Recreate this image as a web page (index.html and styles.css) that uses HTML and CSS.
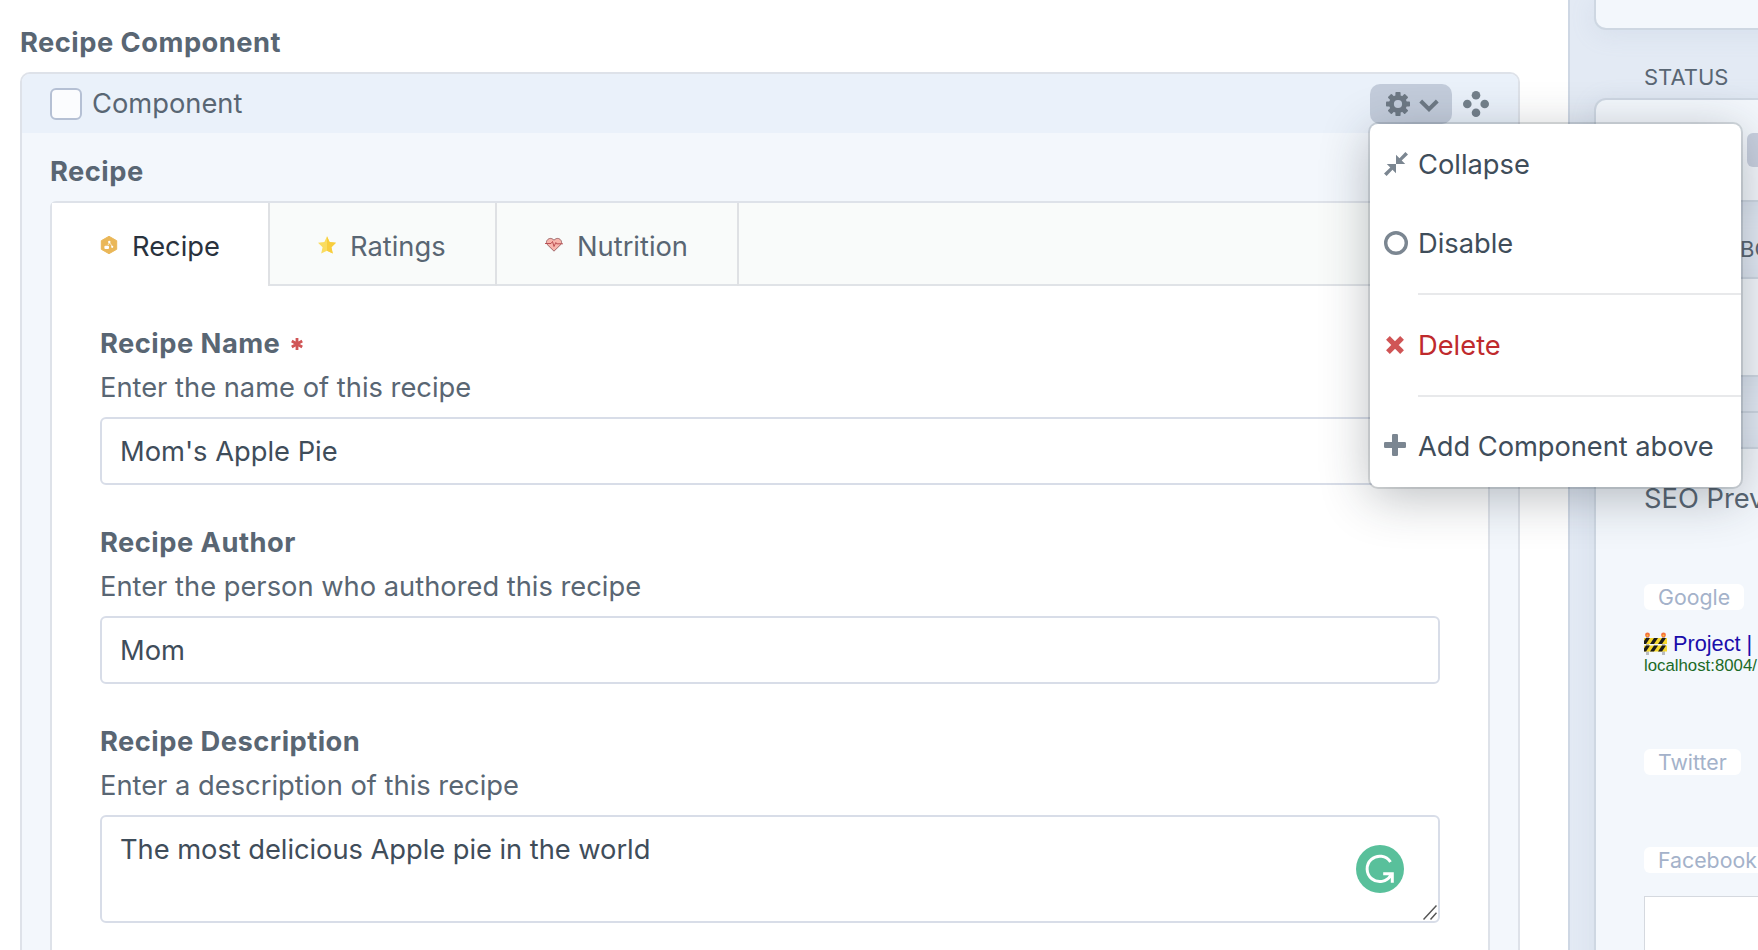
FILE: index.html
```html
<!DOCTYPE html>
<html lang="en">
<head>
<meta charset="utf-8">
<title>Recipe Component</title>
<link rel="stylesheet" href="styles.css">
</head>
<body>
<div class="app">
  <main class="content">
    <h2 class="heading">Recipe Component</h2>
    <section class="block">
      <header class="block-head">
        <span class="checkbox"></span>
        <span class="block-name">Component</span>
        <div class="actions">
          <button class="settings" type="button">
            <svg width="24" height="24" viewBox="0 0 24 24"><g fill="#6e7985"><circle cx="12" cy="12" r="9"/><rect x="9.4" y="0" width="5.2" height="24" rx=".8"/><rect x="0" y="9.4" width="24" height="5.2" rx=".8"/><g transform="rotate(45 12 12)"><rect x="9.4" y="0" width="5.2" height="24" rx=".8"/><rect x="0" y="9.4" width="24" height="5.2" rx=".8"/></g></g><circle cx="12" cy="12" r="4.1" fill="#c3ccdb"/></svg>
            <svg width="20" height="14" viewBox="0 0 20 14"><path d="M1.7 2 10 10.2 18.300 2" fill="none" stroke="#6e7985" stroke-width="4"/></svg>
          </button>
          <svg class="move" width="26" height="26" viewBox="0 0 26 26" fill="#74808b"><circle cx="13" cy="4.300" r="4.300"/><circle cx="4.300" cy="13" r="4.300"/><circle cx="21.700" cy="13" r="4.300"/><circle cx="13" cy="21.700" r="4.300"/></svg>
          <div class="menu">
            <div class="item"><svg width="24" height="24" viewBox="0 0 24 24" fill="#7b8691"><path d="M12 2.800V12H21.200L17.700 8.500 24 2.600 21.400 0 15.500 6.300Z"/><path d="M12 21.200V12H2.800L6.300 15.500 0 21.400 2.600 24 8.500 17.700Z"/></svg><span>Collapse</span></div>
            <div class="item"><svg width="24" height="24" viewBox="0 0 24 24"><circle cx="12" cy="12" r="10.300" fill="none" stroke="#7b8691" stroke-width="3.400"/></svg><span>Disable</span></div>
            <hr>
            <div class="item danger"><svg width="24" height="24" viewBox="0 0 24 24"><path d="M5 6 17 18M17 6 5 18" stroke="#d05556" stroke-width="6.200" stroke-linecap="square" transform="translate(1.540 1.680) scale(.86)"/></svg><span>Delete</span></div>
            <hr>
            <div class="item"><svg width="24" height="24" viewBox="0 0 24 24" fill="#7b8691"><rect x="8" y="0" width="6" height="22" rx="1.300"/><rect x="0" y="8" width="22" height="6" rx="1.300"/></svg><span class="add">Add Component above</span></div>
          </div>
        </div>
      </header>
      <div class="block-body">
        <h3 class="subheading">Recipe</h3>
        <div class="panel">
          <nav class="tabs">
            <a class="tab tab-recipe active">
              <svg width="18" height="18" viewBox="0 0 18 18"><path d="M9 .3 16.700 4.700V13.300L9 17.700 1.300 13.300V4.700Z" fill="#eab758" stroke="#eab758" stroke-linejoin="round"/><g fill="#fff"><rect x="4.400" y="9.800" width="4.600" height="3.200" rx="1"/><circle cx="9.300" cy="6" r="1.200"/><circle cx="12.200" cy="10.800" r="1.100"/></g><path d="M8 9 9.500 6.500 12 10" fill="none" stroke="#fff" stroke-width=".7"/></svg>
              <span>Recipe</span></a>
            <a class="tab tab-ratings">
              <svg width="18" height="18" viewBox="0 0 18 18"><path d="M9 .2 11.600 6 18 6.800 13.400 11.200 14.800 17.500 9 14.700 3.200 17.500 4.600 11.200 0 6.800 6.400 6Z" fill="#fadc60"/><path d="M9 .2 11.600 6 18 6.800 13.400 11.200 14.800 17.500 9 14.700Z" fill="#f8cd3d"/></svg>
              <span>Ratings</span></a>
            <a class="tab tab-nutrition">
              <svg width="18" height="18" viewBox="0 0 18 18"><path d="M9 15.200 2 8.300C-.3 4.500 5-.2 9 4.200 13-.2 18.300 4.500 16 8.300Z" fill="#f8b5ac" stroke="#8d4f52" stroke-width=".8"/><path d="M0 7.500H6L7.500 5.500 9 10.500 10.800 6.500 11.700 7.800H18" fill="none" stroke="#b4454a" stroke-width=".9"/></svg>
              <span>Nutrition</span></a>
          </nav>
          <div class="fields">
            <div class="field">
              <label class="label">Recipe Name<svg width="12" height="14" viewBox="0 0 12 14"><path d="M6 1V13M.8 4 11.200 10M11.200 4 .8 10" stroke="#d05556" stroke-width="2.800"/></svg></label>
              <p class="hint">Enter the name of this recipe</p>
              <div class="input">Mom's Apple Pie</div>
            </div>
            <div class="field">
              <label class="label">Recipe Author</label>
              <p class="hint">Enter the person who authored this recipe</p>
              <div class="input">Mom</div>
            </div>
            <div class="field">
              <label class="label">Recipe Description</label>
              <p class="hint">Enter a description of this recipe</p>
              <div class="input area">The most delicious Apple pie in the world
                <svg class="grammar" width="48" height="48" viewBox="0 0 48 48"><circle cx="24" cy="24" r="24" fill="#59c09b"/><path d="M34.500 17A12.700 12.700 0 1 0 34.800 30.300M27.200 28.800H36.300V37.800" fill="none" stroke="#fff" stroke-width="3"/></svg>
                <svg class="grip" width="14" height="15" viewBox="0 0 14 15"><path d="M.5 14.500 13.500 .5M7.500 14.500 13.500 7.800" stroke="#555" stroke-width="1.500"/></svg>
              </div>
            </div>
          </div>
        </div>
      </div>
    </section>
  </main>
  <aside class="sidebar">
    <div class="card card-top"></div>
    <h4 class="side-title">STATUS</h4>
    <div class="card card-status"><span class="toggle"></span></div>
    <div class="side-strip">BO</div>
    <div class="card card-mid"></div>
    <div class="side-band"></div>
    <div class="card card-seo">
      <h4 class="seo-title">SEO Preview</h4>
      <span class="pill">Google</span>
      <div class="result">
        <svg width="23" height="24" viewBox="0 0 23 24"><path d="M2 5h3v18H2zM18 5h3v18h-3z" fill="#b9bcc2"/><circle cx="3.500" cy="3" r="2.400" fill="#f5703a"/><circle cx="19.500" cy="3" r="2.400" fill="#f5703a"/><circle cx="3.500" cy="3.400" r="1" fill="#ffc533"/><circle cx="19.500" cy="3.400" r="1" fill="#ffc533"/><path d="M0 6h23v6H0zM0 13.500h23v6H0z" fill="#f7d92e"/><path d="M2 6h4l-4 6H0V9zM10 6h4l-4 6H6zM18 6h4l-4 6h-4zM2 13.500h4l-4 6H0v-3zM10 13.500h4l-4 6H6zM18 13.500h4l-4 6h-4z" fill="#1c1c1c"/></svg>
        <span class="link">Project |</span>
      </div>
      <div class="url">localhost:8004/</div>
      <span class="pill pill-tw">Twitter</span>
      <span class="pill pill-fb">Facebook</span>
      <div class="preview"></div>
    </div>
  </aside>
</div>
</body>
</html>
```
FILE: styles.css
```css
* { box-sizing: border-box; }
body {
  margin: 0;
  background: #fff;
  color: #596673;
  font-family: Inter, "Liberation Sans", sans-serif;
  font-size: 27.3px;
  line-height: 40px;
  white-space: nowrap;
}
h2, h3, h4, p { margin: 0; font-size: inherit; }
svg { display: block; flex: none; }
.app { display: flex; width: 1758px; height: 950px; overflow: hidden; }

/* Main column */
.content { width: 1568px; flex: none; padding: 23px 48px 0 20px; }
.heading, .subheading, .label { font-weight: 700; letter-spacing: .48px; }
.heading { margin-bottom: 9px; }
.block {
  width: 1500px;
  height: 900px;
  border: 2px solid #dee2e9;
  border-radius: 10px;
  background: #f3f7fc;
}
.block-head {
  display: flex;
  align-items: center;
  height: 59px;
  padding: 1px 29px 0 28px;
  background: #eaf1fa;
  border-radius: 8px 8px 0 0;
}
.checkbox {
  width: 32px;
  height: 32px;
  margin-right: 10px;
  border: 2px solid #b5c0d4;
  border-radius: 6px;
  background: #fbfcfe;
}
.actions { position: relative; display: flex; align-items: center; gap: 11px; margin-left: auto; height: 40px; }
.settings {
  display: flex;
  align-items: center;
  gap: 9px;
  width: 82px;
  height: 40px;
  margin: 0;
  padding: 0 0 0 16px;
  border: 0;
  border-radius: 10px;
  background: #c3ccdb;
}
.settings svg + svg { margin-top: 3px; }

/* Settings menu */
.menu {
  position: absolute;
  z-index: 2;
  left: 0;
  top: 40px;
  width: 371px;
  height: 363px;
  border-radius: 8px;
  background: #fff;
  box-shadow: 0 0 0 2px rgba(31, 41, 51, .14), 0 10px 50px rgba(31, 41, 51, .3);
  color: #3f4d5a;
}
.item { display: flex; align-items: center; gap: 10px; height: 79.5px; padding-left: 14px; }
.item span { padding-top: 2px; }
.item .add { letter-spacing: -.05px; }
.danger { color: #bf2a2d; }
.menu hr { height: 2px; margin: 10px 0 10px 48px; border: 0; background: #e8e9eb; }

/* Tabbed panel */
.block-body { padding: 19px 28px 0; }
.subheading { margin-bottom: 9px; }
.panel { width: 1440px; height: 800px; border: 2px solid #dee2e9; border-radius: 6px 6px 0 0; background: #fff; }
.tabs { display: flex; height: 83px; background: #f9fbfa; border-bottom: 2px solid #e0e3e7; }
.tab { display: flex; align-items: center; gap: 14px; height: 83px; padding: 4px 0 0 48px; border-right: 2px solid #dfe1e4; }
.tab svg { margin-top: -3px; }
.active { background: #fff; color: #29323d; }
.tab-recipe { width: 218px; }
.tab-ratings { width: 227px; }
.tab-nutrition { width: 242px; }

/* Fields */
.fields { padding: 36px 48px 0; }
.field { margin-bottom: 36px; }
.label { display: flex; align-items: center; gap: 11px; height: 44px; }
.hint { height: 51px; line-height: 43px; }
.input {
  position: relative;
  height: 68px;
  padding-left: 18px;
  border: 2px solid #d8dde8;
  border-radius: 6px;
  line-height: 65px;
  color: #3f4d5a;
}
.area { height: 108px; letter-spacing: -.04px; }
.grammar { position: absolute; right: 34px; top: 28px; }
.grip { position: absolute; right: 1px; bottom: 1px; }

/* Sidebar */
.sidebar { flex: 1; min-width: 0; overflow: hidden; padding-left: 24px; border-left: 2px solid #ced7e4; background: #e3eaf4; }
.card { width: 300px; border: 2px solid #ced7e2; border-radius: 12px; background: #f3f7fc; box-shadow: 0 4px 24px rgba(150, 170, 200, .16); }
.card-top { height: 30px; border-top: 0; border-radius: 0 0 12px 12px; }
.side-title { height: 68px; padding: 27px 0 0 50px; font-size: 22px; font-weight: 400; line-height: 40px; }
.card-status { height: 104px; padding: 33px 0 0 151px; border-radius: 12px 12px 0 0; }
.toggle { display: block; width: 60px; height: 34px; border-radius: 6px; background: #c9d0df; }
.side-strip { height: 75px; padding: 27px 0 0 146px; font-size: 22px; line-height: 40px; }
.card-mid { height: 100px; border-radius: 0; }
.side-band { width: 300px; height: 36px; margin-bottom: 34px; border-bottom: 2px solid #ced7e2; }
.card-seo { height: 600px; padding: 29px 0 0 48px; border-radius: 0; }
.seo-title { height: 106px; font-weight: 400; line-height: 41px; }
.pill {
  display: block;
  width: 100px;
  height: 26px;
  padding-left: 14px;
  border-radius: 6px;
  background: #fff;
  color: #a4b2ca;
  font-size: 21.300px;
  line-height: 27px;
}
.result { display: flex; align-items: center; gap: 6px; height: 44px; margin-top: 12px; font-family: "Liberation Sans", Arial, sans-serif; font-size: 21.700px; color: #1a0dab; }
.url { height: 21px; margin-top: -10px; font-family: "Liberation Sans", Arial, sans-serif; font-size: 16.800px; line-height: 20px; color: #1b6a26; }
.pill-tw { width: 97px; margin-top: 72px; }
.pill-fb { width: 126px; margin-top: 72px; }
.preview { width: 300px; height: 200px; margin-top: 23px; border: 1px solid #d5d9df; background: #fff; }
```
